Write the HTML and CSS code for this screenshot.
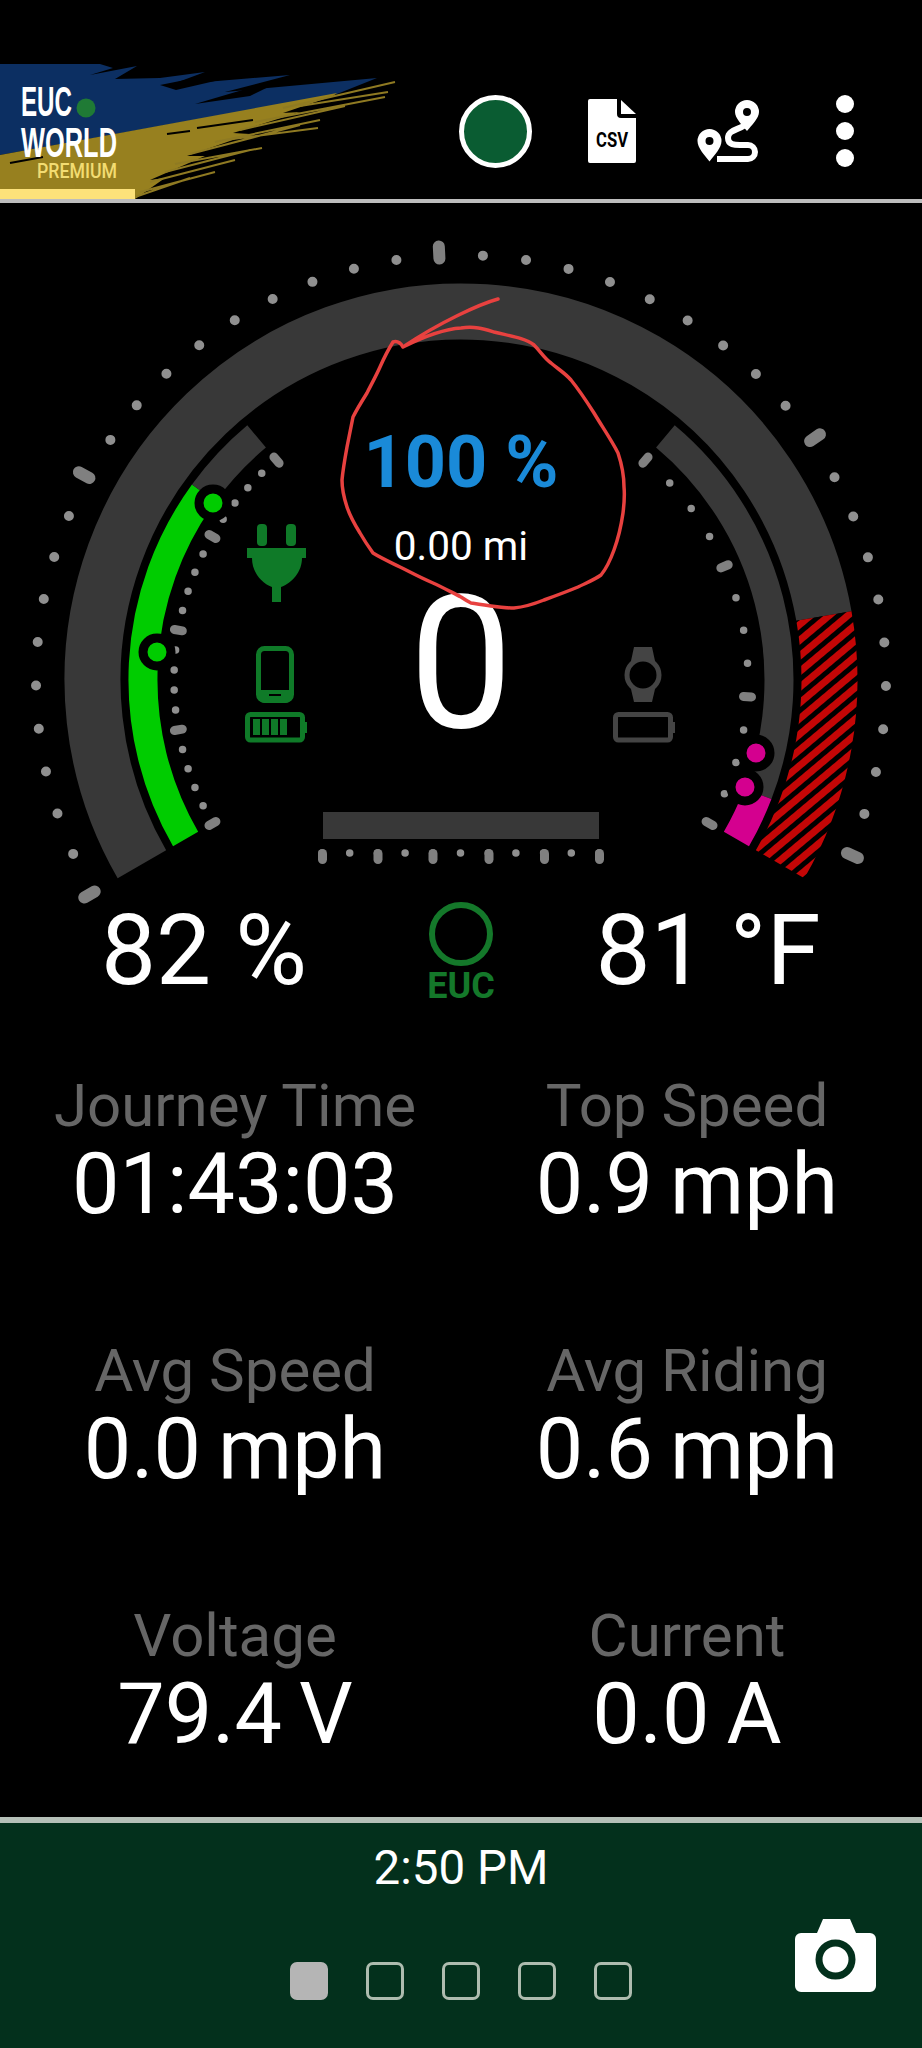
FILE: index.html
```html
<!DOCTYPE html>
<html lang="en">
<head>
    <meta charset="UTF-8">
    <meta name="viewport" content="width=device-width, initial-scale=1.0">
    <title>EUC World</title>
    <link rel="stylesheet" href="styles.css">
</head>
<body>
    <header class="topbar">
        <svg class="logo" viewBox="0 64 400 135">
            <polygon class="logo-blue" points="0,64 100,64 113,68 90,75 137,66 115,79 160,78 205,72 170,85 290,75 225,92 377,78 337,94 0,155"/>
            <polygon class="logo-cut" points="160,85 205,76 262,70 176,90"/>
            <polygon class="logo-cut" points="195,104 293,75 250,96"/>
            <polygon class="logo-gold" points="0,155 337,93 333,96 283,113 300,112 233,133 250,134 187,156 205,156 150,180 165,178 135,199 0,199"/>
            <path class="logo-fleck" d="M283 108L395 82M300 106L388 92M255 122L385 97M240 130L345 106M215 142L320 120M225 140L318 128M190 154L300 125M175 164L262 148M165 172L250 150M150 182L235 160M140 192L215 172M135 197L190 178"/>
            <path class="logo-streak" d="M167 134L190 131M197 128L253 120M10 163L43 157"/>
            <rect class="logo-strip" x="0" y="189" width="135" height="10"/>
            <text class="logo-name" x="21" y="116" textLength="51" lengthAdjust="spacingAndGlyphs">EUC</text>
            <circle class="logo-dot" cx="86" cy="108" r="9.500"/>
            <text class="logo-name" x="21" y="157" textLength="96" lengthAdjust="spacingAndGlyphs">WORLD</text>
            <text class="logo-premium" x="37" y="178" textLength="80" lengthAdjust="spacingAndGlyphs">PREMIUM</text>
        </svg>
        <div class="actions">
            <div class="action"><span class="status-dot"></span></div>
            <div class="action">
                <svg class="icon-csv" viewBox="0 0 48 64">
                    <path d="M2 0H29V15a4 4 0 0 0 4 4H48V62a2 2 0 0 1-2 2H2a2 2 0 0 1-2-2V2a2 2 0 0 1 2-2Z"/>
                    <path d="M33 1L48 15H33Z"/>
                    <text x="24" y="48" textLength="32" lengthAdjust="spacingAndGlyphs" text-anchor="middle">CSV</text>
                </svg>
            </div>
            <div class="action">
                <svg class="icon-route" viewBox="696 100 64 64">
                    <path class="route-fill" fill-rule="evenodd" d="M709.500 130a12 12 0 0 1 12 12c0 7-7 14-12 20.500c-5-6.500-12-13.500-12-20.500a12 12 0 0 1 12-12Zm0 8a4 4 0 1 0 0 8a4 4 0 0 0 0-8Z"/>
                    <path class="route-fill" fill-rule="evenodd" d="M747 101a12 12 0 0 1 12 12c0 6-7 13-12 19c-5-6-12-13-12-19a12 12 0 0 1 12-12Zm0 8a4 4 0 1 0 0 8a4 4 0 0 0 0-8Z"/>
                    <path class="route-line" d="M745 126C738 131 728 131 728 139C728 146 735 146 740 146H748A7 7 0 0 1 748 160H717"/>
                </svg>
            </div>
            <div class="action">
                <div class="kebab"><span></span><span></span><span></span></div>
            </div>
        </div>
    </header>

    <main>
        <svg class="gauge" viewBox="0 203 922 702">
            <defs>
                <pattern id="hatch" patternUnits="userSpaceOnUse" width="12" height="12" patternTransform="rotate(-40)">
                    <rect width="12" height="12" fill="#c40606"/>
                    <rect width="12" height="5" fill="#000"/>
                </pattern>
            </defs>

            <!-- scale dots -->
            <path class="dots-outer" d="M92.900 892.500A425 425 0 1 1 829.100 892.500"/>
            <path class="dots-inner dots-left" d="M212.500 823.500A287 287 0 0 1 276.500 460.100"/>
            <path class="dots-inner dots-right" d="M645.500 460.100A287 287 0 0 1 709.500 823.500"/>
            <path class="dots-inner dots-bar" d="M322 853H600"/>

            <!-- long ticks -->
            <g class="ticks-outer">
                <line x1="461" y1="257" x2="461" y2="245" transform="rotate(-120 461 680)"/>
                <line x1="461" y1="257" x2="461" y2="245" transform="rotate(-61.460 461 680)"/>
                <line x1="461" y1="258" x2="461" y2="246" transform="rotate(-2.930 461 680)"/>
                <line x1="461" y1="257" x2="461" y2="245" transform="rotate(55.610 461 680)"/>
                <line x1="461" y1="257" x2="461" y2="245" transform="rotate(114.150 461 680)"/>
            </g>
            <g class="ticks-inner">
                <line x1="461" y1="397" x2="461" y2="389" transform="rotate(-120 461 680)"/>
                <line x1="461" y1="397" x2="461" y2="389" transform="rotate(-100 461 680)"/>
                <line x1="461" y1="397" x2="461" y2="389" transform="rotate(-80 461 680)"/>
                <line x1="461" y1="397" x2="461" y2="389" transform="rotate(-60 461 680)"/>
                <line x1="461" y1="397" x2="461" y2="389" transform="rotate(-40 461 680)"/>
                <line x1="461" y1="397" x2="461" y2="389" transform="rotate(40 461 680)"/>
                <line x1="461" y1="397" x2="461" y2="389" transform="rotate(66.670 461 680)"/>
                <line x1="461" y1="397" x2="461" y2="389" transform="rotate(93.330 461 680)"/>
                <line x1="461" y1="397" x2="461" y2="389" transform="rotate(120 461 680)"/>
                <line x1="322.500" y1="853.500" x2="322.500" y2="859.500"/>
                <line x1="378" y1="853.500" x2="378" y2="859.500"/>
                <line x1="433" y1="853.500" x2="433" y2="859.500"/>
                <line x1="489" y1="853.500" x2="489" y2="859.500"/>
                <line x1="544.500" y1="853.500" x2="544.500" y2="859.500"/>
                <line x1="599.500" y1="853.500" x2="599.500" y2="859.500"/>
            </g>

            <!-- speed arc -->
            <path class="arc-track arc-wide" d="M141.900 864.250A368.500 368.500 0 1 1 823.900 616"/>
            <path class="arc-hatch arc-wide" d="M823.900 616A368.500 368.500 0 0 1 780.100 864.250"/>

            <!-- battery and temperature arcs -->
            <path class="arc-green arc-thin" d="M185.600 839A318 318 0 0 1 203.700 493"/>
            <path class="arc-track arc-thin" d="M203.700 493A318 318 0 0 1 256.600 436.400"/>
            <path class="arc-track arc-thin" d="M665.400 436.400A318 318 0 0 1 757.900 793.900"/>
            <path class="arc-magenta arc-thin" d="M757.900 793.900A318 318 0 0 1 736.400 839"/>

            <circle class="knob knob-green" cx="213" cy="503" r="14"/>
            <circle class="knob knob-green" cx="157" cy="652" r="14"/>
            <circle class="knob knob-magenta" cx="756" cy="753" r="14"/>
            <circle class="knob knob-magenta" cx="745" cy="787" r="14"/>

            <rect class="bar" x="323" y="812" width="276" height="27"/>

            <!-- plug -->
            <g class="icon-green">
                <rect x="257" y="524" width="10" height="22" rx="4"/>
                <rect x="286" y="524" width="10" height="22" rx="4"/>
                <path d="M247 548H306V558H302C302 572 292 583 281 587V602H272V587C261 583 252 572 252 558H247Z"/>
            </g>

            <!-- phone and its battery -->
            <g class="icon-outline icon-outline-green">
                <rect x="258.500" y="648.500" width="33" height="52" rx="6"/>
                <rect x="247.500" y="714.500" width="55" height="25.500" rx="3"/>
            </g>
            <g class="icon-green">
                <path fill-rule="evenodd" d="M258 690H292V696a7 7 0 0 1-7 7H265a7 7 0 0 1-7-7ZM269 694V696H281V694Z"/>
                <rect x="253" y="719" width="7" height="16"/>
                <rect x="262" y="719" width="7" height="16"/>
                <rect x="271" y="719" width="7" height="16"/>
                <rect x="280" y="719" width="7" height="16"/>
                <rect x="302" y="722" width="5" height="11"/>
            </g>

            <!-- watch and its battery -->
            <g class="icon-outline icon-outline-gray">
                <circle cx="643" cy="675" r="16"/>
                <rect x="615.500" y="714.500" width="55" height="25.500" rx="3"/>
            </g>
            <g class="icon-gray">
                <path d="M634 647H652L655 661H631Z"/>
                <path d="M631 689H655L652 702H634Z"/>
                <rect x="670" y="722" width="5" height="11"/>
            </g>

            <text class="gauge-battery" x="461" y="487">100 %</text>
            <text class="gauge-distance" x="461" y="560">0.00 mi</text>
            <text class="gauge-speed" x="461" y="727">0</text>

            <!-- hand drawn circle over the screenshot -->
            <path class="scribble" d="M498 299C480 304 440 322 403 347C425 336 445 329 461 328C475 326 484 329 494 332C510 336 525 338 534 345C541 352 544 358 551 363C558 369 565 373 571 380C580 391 587 402 594 413C603 428 612 441 618 453C622 465 624 476 624 487C625 497 624 505 623 513C621 527 618 539 614 550C610 561 606 569 601 575C594 580 586 583 578 587C566 592 555 596 544 600C534 604 524 607 514 608C505 608 498 607 491 606C484 605 477 604 471 603C467 601 464 599 461 597C451 592 442 587 433 583C421 578 410 572 400 567C390 562 381 558 373 553C368 546 364 540 360 533C355 525 350 516 347 507C344 498 342 489 342 480C343 469 345 458 347 447C349 437 351 427 353 417C357 409 362 401 367 393C371 385 376 376 380 367C384 358 388 350 393 342C396 341 400 342 403 347"/>
        </svg>

        <section class="readings">
            <div class="reading">82 %</div>
            <div class="connection">
                <span class="connection-ring"></span>
                <span class="connection-label">EUC</span>
            </div>
            <div class="reading reading-temp">81 °F</div>
        </section>

        <section class="stats">
            <div class="stat"><span class="stat-label">Journey Time</span><span class="stat-value">01:43:03</span></div>
            <div class="stat"><span class="stat-label">Top Speed</span><span class="stat-value">0.9 mph</span></div>
            <div class="stat"><span class="stat-label">Avg Speed</span><span class="stat-value">0.0 mph</span></div>
            <div class="stat"><span class="stat-label">Avg Riding</span><span class="stat-value">0.6 mph</span></div>
            <div class="stat"><span class="stat-label">Voltage</span><span class="stat-value">79.4 V</span></div>
            <div class="stat"><span class="stat-label">Current</span><span class="stat-value">0.0 A</span></div>
        </section>
    </main>

    <footer class="bottombar">
        <div class="clock">2:50 PM</div>
        <div class="pager">
            <span class="page page-active"></span>
            <span class="page"></span>
            <span class="page"></span>
            <span class="page"></span>
            <span class="page"></span>
        </div>
        <svg class="camera" viewBox="795 1919 81 73">
            <path class="camera-body" d="M823 1919H850L856 1933H870a6 6 0 0 1 6 6V1986a6 6 0 0 1-6 6H801a6 6 0 0 1-6-6V1939a6 6 0 0 1 6-6H817Z"/>
            <circle class="camera-lens" cx="835.500" cy="1959.500" r="16.500"/>
        </svg>
    </footer>
</body>
</html>
```

FILE: styles.css
```css
* {
    box-sizing: border-box;
}
body {
    margin: 0;
    height: 2048px;
    display: flex;
    flex-direction: column;
    overflow: hidden;
    background: #000;
    color: #fff;
    font-family: Roboto, sans-serif;
}

/* top bar */
.topbar {
    height: 203px;
    display: flex;
    justify-content: space-between;
    align-items: flex-end;
    border-bottom: 4px solid #bdbdbd;
}
.logo {
    display: block;
    width: 400px;
    height: 135px;
}
.logo-blue { fill: #0c2f62; }
.logo-cut { fill: #000; }
.logo-gold { fill: #97801f; }
.logo-streak {
    fill: none;
    stroke: #000;
    stroke-width: 2;
}
.logo-fleck {
    fill: none;
    stroke: #8f7a22;
    stroke-width: 2;
}
.logo-strip { fill: #fde27a; }
.logo-dot { fill: #1f7a35; }
.logo-name {
    fill: #fff;
    font-family: "Liberation Sans", sans-serif;
    font-size: 43px;
    font-weight: bold;
}
.logo-premium {
    fill: #f2dc72;
    font-size: 19.5px;
    font-weight: 500;
}
.actions {
    display: flex;
    height: 199px;
    padding: 95px 19px 0 0;
}
.action {
    width: 116.5px;
    height: 72px;
    display: flex;
    align-items: center;
    justify-content: center;
}
.status-dot {
    width: 73px;
    height: 73px;
    border-radius: 50%;
    border: 5px solid #fff;
    background: #0a5c32;
}
.icon-csv {
    width: 48px;
    height: 64px;
    fill: #fff;
}
.icon-csv text {
    fill: #000;
    font-size: 21px;
    font-weight: bold;
}
.icon-route {
    width: 64px;
    height: 64px;
}
.route-fill { fill: #fff; }
.route-line {
    fill: none;
    stroke: #fff;
    stroke-width: 6;
}
.kebab {
    display: flex;
    flex-direction: column;
    gap: 9px;
}
.kebab span {
    width: 18px;
    height: 18px;
    border-radius: 50%;
    background: #fff;
}

/* gauge */
.gauge {
    display: block;
    width: 922px;
    height: 702px;
}
.dots-outer,
.dots-inner {
    fill: none;
    stroke: #8f8f8f;
    stroke-linecap: round;
}
.dots-outer {
    stroke-width: 10;
    stroke-dasharray: 0 43.42;
}
.dots-inner { stroke-width: 7.5; }
.dots-left { stroke-dasharray: 0 20.04; }
.dots-right { stroke-dasharray: 0 33.39; }
.dots-bar { stroke-dasharray: 0 27.7; }
.ticks-outer line,
.ticks-inner line {
    stroke: #808080;
    stroke-linecap: round;
}
.ticks-outer line { stroke-width: 12; }
.ticks-inner line { stroke-width: 9; }
.arc-track,
.arc-hatch,
.arc-green,
.arc-magenta {
    fill: none;
}
.arc-wide { stroke-width: 56; }
.arc-thin { stroke-width: 29; }
.arc-track { stroke: #383838; }
.arc-hatch { stroke: url(#hatch); }
.arc-green { stroke: #00cc00; }
.arc-magenta { stroke: #d4008f; }
.knob {
    stroke: #000;
    stroke-width: 9;
}
.knob-green { fill: #00cc00; }
.knob-magenta { fill: #d4008f; }
.bar { fill: #383838; }
.icon-green { fill: #0f7a28; }
.icon-gray { fill: #444; }
.icon-outline {
    fill: none;
    stroke-width: 5;
}
.icon-outline-green { stroke: #0f7a28; }
.icon-outline-gray { stroke: #444; }
.gauge-battery,
.gauge-distance,
.gauge-speed {
    text-anchor: middle;
    fill: #fff;
}
.gauge-battery {
    fill: #1a8ad8;
    font-size: 72px;
    font-weight: bold;
}
.gauge-distance { font-size: 40.5px; }
.gauge-speed { font-size: 185px; }
.scribble {
    fill: none;
    stroke: #e8413f;
    stroke-width: 3.5;
    stroke-linecap: round;
}

/* battery, connection, temperature */
.readings {
    height: 128px;
    display: grid;
    grid-template-columns: 408px 1fr 408px;
    text-align: center;
}
.reading {
    font-size: 98px;
    line-height: 92px;
}
.reading-temp {
    padding-right: 20px;
}
.connection {
    display: flex;
    flex-direction: column;
    align-items: center;
}
.connection-ring {
    width: 64px;
    height: 64px;
    margin-top: -3px;
    border: 6px solid #14782a;
    border-radius: 50%;
}
.connection-label {
    color: #14782a;
    font-size: 36px;
    font-weight: bold;
    line-height: 40px;
}

/* stats */
.stats {
    display: grid;
    grid-template-columns: 1fr 1fr;
    grid-auto-rows: 158px;
    row-gap: 107px;
    padding: 39px 9px 0;
}
.stat {
    display: flex;
    flex-direction: column;
    align-items: center;
}
.stat-label {
    color: #666;
    font-size: 60px;
    line-height: 68px;
}
.stat-value {
    font-size: 84.5px;
    line-height: 90px;
    word-spacing: -4px;
}

/* bottom bar */
.bottombar {
    position: relative;
    margin-top: auto;
    height: 231px;
    border-top: 6px solid #b5c0b8;
    background: #03301c;
}
.clock {
    padding-top: 18px;
    text-align: center;
    font-size: 47.5px;
    line-height: 54px;
}
.pager {
    display: flex;
    justify-content: center;
    gap: 38px;
    margin-top: 67px;
}
.page {
    width: 38px;
    height: 38px;
    border: 3.5px solid #aebcaf;
    border-radius: 7px;
}
.page-active {
    background: #b5b5b5;
    border-color: #b5b5b5;
}
.camera {
    position: absolute;
    right: 46px;
    top: 96px;
    width: 81px;
    height: 73px;
}
.camera-body { fill: #fff; }
.camera-lens {
    fill: #fff;
    stroke: #03301c;
    stroke-width: 7;
}
```
